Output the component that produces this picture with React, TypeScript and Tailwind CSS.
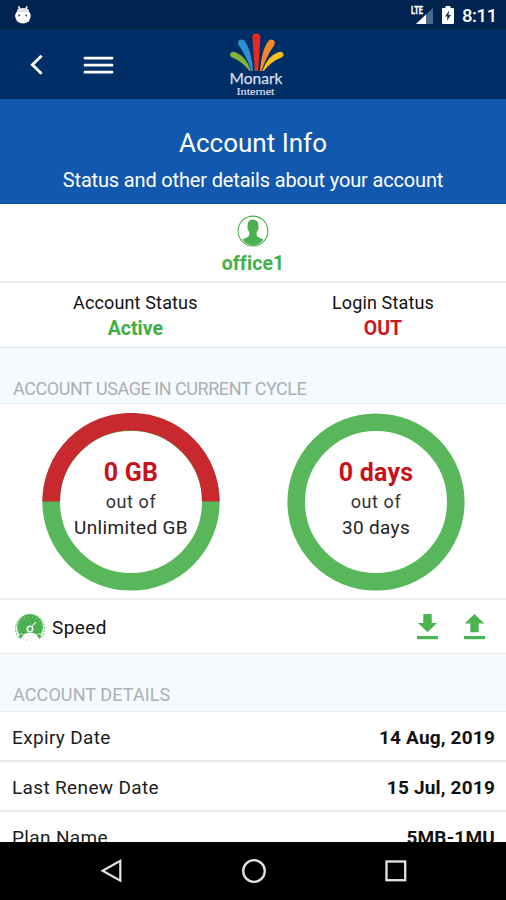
import React from "react";

function StatusBar() {
  return (
    <div className="flex h-[30px] shrink-0 items-center bg-[#00234f] pl-[14px] pr-[9px] text-white">
      <svg width="18" height="20" viewBox="0 0 18 20">
        <path d="M4.6 1.2 6 4.5M13 1.2 11.8 4.5" stroke="#fff" strokeWidth="1.6" />
        <path d="M3.4 4.3Q9 1.6 14.6 4.3L15.3 8H2.7Z" fill="#dfe2ea" />
        <path d="M2.6 7H15.4L16.6 9.5V12L15 16.2Q9 20.6 3 16.2L1.2 12V9.5Z" fill="#fff" />
        <circle cx="5.2" cy="10.5" r="1" fill="#3b4a70" />
        <circle cx="12.2" cy="10.5" r="1" fill="#3b4a70" />
      </svg>
      <div className="ml-auto flex items-center">
        <svg width="24" height="22" viewBox="0 0 24 22">
          <path d="M22 4V20H5Z" fill="#4d6c8d" />
          <path d="M15 10.6V20H5Z" fill="#fff" />
          <text x="0" y="10.3" fill="#fff" stroke="#fff" strokeWidth="0.3" fontFamily="Roboto, sans-serif" fontSize="10" fontWeight="700" textLength="12" lengthAdjust="spacingAndGlyphs">LTE</text>
        </svg>
        <svg className="ml-[7px] mr-px" width="12" height="20" viewBox="0 0 12 20">
          <path d="M3.5 1H8.5V3H11Q12 3 12 4V18Q12 19 11 19H1Q0 19 0 18V4Q0 3 1 3H3.5Z" fill="#fff" />
          <path d="M7.2 5.5 3 11.5H5.5L4.8 16 9 10H6.5Z" fill="#14305c" />
        </svg>
        <span className="ml-[7px] w-[35px] whitespace-nowrap pt-[1px] text-[18.5px] font-medium leading-[30px] tracking-[-0.4px]">8:11</span>
      </div>
    </div>
  );
}

function Logo() {
  return (
    <svg width="60" height="68" viewBox="226 30 60 68">
      <path d="M252.4 36.5Q252.7 33.5 256.5 33.5Q260.2 33.5 260.4 36.5L258.2 71H254.8Z" fill="#e62a24" />
      <path d="M238.2 41.6Q240 38.2 243.8 40Q251.4 49 253 71H251.5Q246.5 56 238.8 45.2Q237.6 43.5 238.2 41.6Z" fill="#2b93d4" />
      <path d="M274.6 41.6Q273 38.2 269.2 40Q261.6 49 260 71H261.5Q266.5 56 274.2 45.2Q275.3 43.5 274.6 41.6Z" fill="#f5862a" />
      <path d="M230.2 53.8Q231.6 50.8 234.8 52Q246 56 251 71H249.5Q242.5 61.5 232.2 57.4Q229.6 56.4 230.2 53.8Z" fill="#83b435" />
      <path d="M283.4 53.8Q282 50.8 278.8 52Q267.5 56 262.3 71H263.8Q270.8 61.5 281.4 57.4Q284 56.4 283.4 53.8Z" fill="#f8bf20" />
      <text x="229.5" y="84.3" fill="#d6deef" stroke="#d6deef" strokeWidth="0.25" fontFamily="Lato, sans-serif" fontSize="16" textLength="53" lengthAdjust="spacingAndGlyphs">Monark</text>
      <text x="236.5" y="95.4" fill="#d6deef" stroke="#d6deef" strokeWidth="0.2" fontFamily="Liberation Serif, serif" fontSize="10.5" textLength="38" lengthAdjust="spacingAndGlyphs">Internet</text>
    </svg>
  );
}

function Header() {
  return (
    <header className="flex h-[69px] shrink-0 items-start border-b border-[#00285c] bg-[#002e67]">
      <svg className="ml-[28px] mt-[23px]" width="18" height="24" viewBox="0 0 18 24">
        <path d="M13.6 2.8 4.4 11.8 13.6 20.8" fill="none" stroke="#fff" strokeWidth="2.9" />
      </svg>
      <svg className="ml-[37px] mt-[26px]" width="31" height="22" viewBox="0 0 31 22">
        <path d="M2 2.2H29M2 9.2H29M2 16.2H29" stroke="#fff" strokeWidth="2.8" strokeLinecap="round" />
      </svg>
      <div className="ml-[112px]">
        <Logo />
      </div>
    </header>
  );
}

function User() {
  return (
    <section className="flex h-[79px] shrink-0 flex-col items-center border-b-2 border-[#eeeeee] pt-[11px]">
      <svg className="shrink-0" width="32" height="32" viewBox="0 0 32 32">
        <circle cx="16" cy="16" r="14.9" fill="#fff" stroke="#4bb04f" strokeWidth="1.1" />
        <path d="M10.7 9.5Q10.8 4.6 16 4.6Q21.2 4.6 21.3 9.5L21.6 12.5Q21.4 15 19.7 17V20.5Q21 22.6 26.5 24.5Q22.5 30.2 16 30.2Q9.5 30.2 5.5 24.5Q11 22.6 12.3 20.5V17Q10.6 15 10.4 12.5Z" fill="#4bb04f" />
      </svg>
      <span className="mt-[5px] text-[19.5px] font-bold leading-[24px] tracking-[0.1px] text-[#43b149]">office1</span>
    </section>
  );
}

function Status({ label, value, tone }: { label: string; value: string; tone: string }) {
  return (
    <div className="flex flex-col items-center pt-[7px]">
      <span className="text-[18px] leading-[26px] tracking-[0.15px]">{label}</span>
      <span className={"text-[19.5px] font-bold leading-[25px] " + tone}>{value}</span>
    </div>
  );
}

function SectionTitle({ children, className }: { children: React.ReactNode; className: string }) {
  return (
    <div className={"flex shrink-0 items-end border-b border-[#e6eef0] bg-[#f4fafd] pl-[13px] text-[18px] leading-[26px] text-[#acb0b2] " + className}>
      {children}
    </div>
  );
}

function Usage({ half, value, total }: { half?: boolean; value: string; total: string }) {
  return (
    <div className="grid size-[178px] place-items-center">
      <svg className="col-start-1 row-start-1" width="178" height="178" viewBox="0 0 178 178">
        <circle cx="89" cy="89" r="79.8" fill="none" stroke="#59b75b" strokeWidth="17.6" />
        {half && <path d="M9.2 88.5A79.8 79.8 0 0 1 168.8 88.5" fill="none" stroke="#c7292f" strokeWidth="17.6" />}
      </svg>
      <div className="col-start-1 row-start-1 flex flex-col items-center pb-[5px]">
        <span className="text-[25px] font-bold leading-[30px] tracking-[0.2px] text-[#c51319]">{value}</span>
        <span className="text-[18px] leading-[27px] tracking-[0.6px] text-[#333333]">out of</span>
        <span className="text-[19px] leading-[26px] tracking-[0.35px] text-[#222222]">{total}</span>
      </div>
    </div>
  );
}

function SpeedGauge() {
  return (
    <svg width="32" height="28" viewBox="0 0 32 28">
      <path d="M5 25A14.4 14.4 0 1 1 27 25" fill="none" stroke="#8fcf92" strokeWidth="1.3" strokeDasharray="2.4 0.9" />
      <path d="M7 23.5A12.9 12.9 0 1 1 25 23.5Q21 19.5 16 19.8Q11 19.5 7 23.5Z" fill="#4bb04f" />
      <circle cx="16" cy="15.5" r="11.8" fill="none" stroke="#a5d9a7" strokeWidth="1.1" strokeDasharray="0.8 3.3" />
      <path d="M17.8 13.6 22 9" stroke="#d9efd9" strokeWidth="1.3" />
      <circle cx="16" cy="16" r="2.7" fill="#4bb04f" stroke="#fff" strokeWidth="1.5" />
      <path d="M4.2 22.5 7.5 20.5 9.5 22.8 6.3 26.5ZM27.8 22.5 24.5 20.5 22.5 22.8 25.7 26.5Z" fill="#4bb04f" stroke="#fff" strokeWidth=".7" />
    </svg>
  );
}

function DetailRow({ label, value }: { label: string; value: string }) {
  return (
    <div className="flex h-[50px] shrink-0 items-center justify-between border-b-2 border-[#e9e9e9] pl-[12px] pr-[11px] pt-[3px]">
      <span className="text-[19px] leading-[24px] tracking-[0.35px] text-[#1c1c1c]">{label}</span>
      <span className="text-[19px] font-bold leading-[24px] tracking-[0.2px]">{value}</span>
    </div>
  );
}

export default function App() {
  return (
    <div className="flex h-[900px] w-[506px] flex-col overflow-hidden bg-white font-['Roboto',sans-serif] text-[#111111]">
      <StatusBar />
      <Header />
      <section className="flex h-[105px] shrink-0 flex-col items-center border-b border-[#0c4fa0] bg-[#1258ae] pt-[28px] text-white">
        <h1 className="text-[26px] leading-[32px]">Account Info</h1>
        <p className="mt-[8px] text-[20px] leading-[26px] tracking-[-0.16px]">Status and other details about your account</p>
      </section>
      <main className="flex min-h-0 flex-1 flex-col overflow-hidden">
        <User />
        <section className="flex h-[65px] shrink-0 justify-between border-b border-[#e6e9ea] pl-[73px] pr-[72px]">
          <Status label="Account Status" value="Active" tone="text-[#3fb045]" />
          <Status label="Login Status" value="OUT" tone="text-[#c9191f]" />
        </section>
        <SectionTitle className="h-[56px] pb-[1px] tracking-[-0.45px]">ACCOUNT USAGE IN CURRENT CYCLE</SectionTitle>
        <section className="flex h-[196px] shrink-0 justify-between border-b-2 border-[#eeeeee] pl-[42px] pr-[41px] pt-[9px]">
          <Usage half value="0 GB" total="Unlimited GB" />
          <Usage value="0 days" total="30 days" />
        </section>
        <section className="flex h-[54px] shrink-0 items-center border-b border-[#e6e9ea] pl-[14px] pr-[21px]">
          <SpeedGauge />
          <span className="ml-[6px] pt-[2px] text-[19px] leading-[24px] tracking-[0.4px]">Speed</span>
          <div className="ml-auto flex gap-[26px]">
            <svg width="21" height="26" viewBox="0 0 21 26">
              <path d="M6.3 0H14.7V9H20L10.5 18.2 1 9H6.3Z" fill="#4bb350" />
              <path d="M0 22H21V25.2H0Z" fill="#4bb350" />
            </svg>
            <svg width="21" height="26" viewBox="0 0 21 26">
              <path d="M6.3 18.2H14.7V9.5H20.3L10.5 0 .7 9.5H6.3Z" fill="#4bb350" />
              <path d="M0 22H21V25.2H0Z" fill="#4bb350" />
            </svg>
          </div>
        </section>
        <SectionTitle className="h-[58px] pb-[3px] tracking-[0.1px]">ACCOUNT DETAILS</SectionTitle>
        <DetailRow label="Expiry Date" value="14 Aug, 2019" />
        <DetailRow label="Last Renew Date" value="15 Jul, 2019" />
        <DetailRow label="Plan Name" value="5MB-1MU" />
      </main>
      <nav className="flex h-[58px] shrink-0 items-center justify-between bg-black pl-[100px] pr-[98px]">
        <svg width="24" height="26" viewBox="0 0 24 26">
          <path d="M20.3 2.8V22.7L2.6 12.7Z" fill="none" stroke="#e4e4e4" strokeWidth="2.2" />
        </svg>
        <svg width="26" height="26" viewBox="0 0 26 26">
          <circle cx="13" cy="13" r="10.8" fill="none" stroke="#e4e4e4" strokeWidth="2.3" />
        </svg>
        <svg width="24" height="26" viewBox="0 0 24 26">
          <rect x="2.5" y="3.5" width="18.7" height="18.7" fill="none" stroke="#e4e4e4" strokeWidth="2.3" />
        </svg>
      </nav>
    </div>
  );
}
